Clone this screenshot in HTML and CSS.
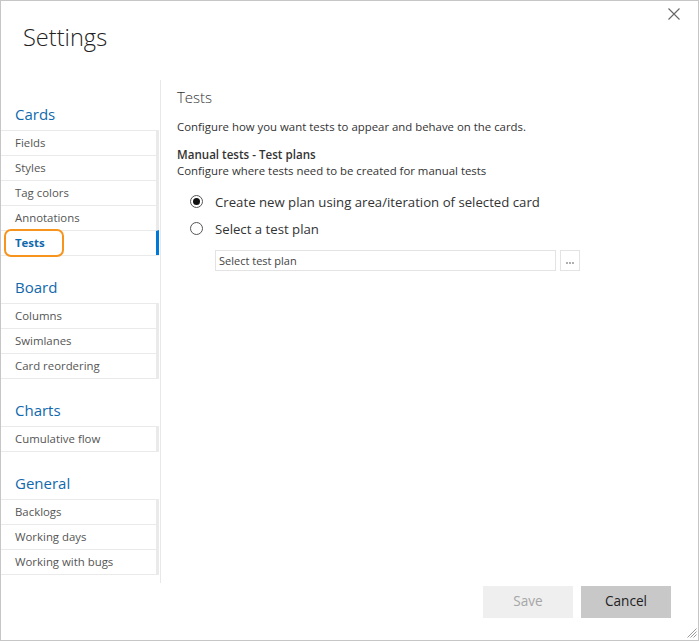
FILE: index.html
```html
<!DOCTYPE html>
<html>
<head>
<meta charset="utf-8">
<link rel="stylesheet" href="styles.css">
</head>
<body>
<div class="dialog">
  <div class="header">
    <h1 class="title">Settings</h1>
    <button class="close" aria-label="Close">
      <svg width="12" height="12" viewBox="0 0 12 12"><path d="M0.5 0.5L11.5 11.5M11.5 0.5L0.5 11.5" stroke="#666" stroke-width="1.1" fill="none"/></svg>
    </button>
  </div>
  <div class="main">
    <nav class="sidebar">
      <div class="section first">
        <div class="section-title">Cards</div>
        <ul class="items">
          <li class="item">Fields</li>
          <li class="item">Styles</li>
          <li class="item">Tag colors</li>
          <li class="item">Annotations</li>
          <li class="item selected">Tests<span class="highlight"></span></li>
        </ul>
      </div>
      <div class="section">
        <div class="section-title">Board</div>
        <ul class="items">
          <li class="item">Columns</li>
          <li class="item">Swimlanes</li>
          <li class="item">Card reordering</li>
        </ul>
      </div>
      <div class="section">
        <div class="section-title">Charts</div>
        <ul class="items">
          <li class="item">Cumulative flow</li>
        </ul>
      </div>
      <div class="section">
        <div class="section-title">General</div>
        <ul class="items">
          <li class="item">Backlogs</li>
          <li class="item">Working days</li>
          <li class="item">Working with bugs</li>
        </ul>
      </div>
    </nav>
    <div class="content">
      <h2 class="content-title">Tests</h2>
      <p class="desc">Configure how you want tests to appear and behave on the cards.</p>
      <div class="group-title">Manual tests - Test plans</div>
      <div class="group-desc">Configure where tests need to be created for manual tests</div>
      <div class="options">
        <label class="option"><span class="radio checked"></span>Create new plan using area/iteration of selected card</label>
        <label class="option"><span class="radio"></span>Select a test plan</label>
      </div>
      <div class="picker">
        <div class="picker-input">Select test plan</div>
        <div class="picker-btn"><span class="dots"></span></div>
      </div>
    </div>
  </div>
  <div class="footer">
    <button class="btn btn-save">Save</button>
    <button class="btn btn-cancel">Cancel</button>
  </div>
  <svg class="grip" width="11" height="11" viewBox="0 0 11 11">
    <path d="M10.5 1.5L1.5 10.5M10.5 4.5L4.5 10.5M10.5 7.5L7.5 10.5" stroke="#9a9a9a" stroke-width="1" fill="none"/>
  </svg>
</div>
</body>
</html>
```

FILE: styles.css
```css
* { box-sizing: border-box; }
html, body { margin: 0; padding: 0; background: #fff; }
body {
  font-family: "Open Sans", "Noto Sans", "Liberation Sans", sans-serif;
  color: #333;
}
.dialog {
  position: relative;
  width: 699px;
  height: 641px;
  border: 1px solid #c6c6c6;
  display: flex;
  flex-direction: column;
  background: #fff;
}
.header {
  height: 79px;
  flex: none;
  padding-left: 22px;
  position: relative;
}
.title {
  margin: 0;
  padding-top: 18px;
  font-size: 23.6px;
  font-weight: 300;
  line-height: 36px;
  color: #222;
}
.close {
  position: absolute;
  top: 7px;
  right: 18px;
  width: 12px;
  height: 12px;
  padding: 0;
  border: 0;
  background: transparent;
  display: block;
}
.close svg { display: block; }
.main {
  height: 503px;
  flex: none;
  display: flex;
}
.sidebar {
  flex: none;
  border-right: 1px solid #e8e8e8;
  width: 160px;
  padding-right: 1px;
}
.section { margin-top: 20px; }
.section.first { margin-top: 23px; }
.section-title {
  font-size: 15px;
  line-height: 22px;
  padding-left: 14px;
  color: #1169ad;
  margin-bottom: 5px;
}
.items {
  list-style: none;
  margin: 0;
  padding: 0;
  border-bottom: 1px solid #eaeaea;
}
.item {
  position: relative;
  height: 25px;
  border-top: 1px solid #eaeaea;
  border-right: 3px solid #eaeaea;
  padding-left: 14px;
  font-size: 11.4px;
  line-height: 23px;
  color: #555;
}
.item.selected {
  color: #1169ad;
  font-weight: 700;
  border-right-color: #0078d7;
}
.highlight {
  position: absolute;
  left: 3px;
  top: -2px;
  width: 60px;
  height: 28px;
  border: 2px solid #f7941d;
  border-radius: 7px;
}
.content {
  flex: 1;
  padding-left: 16px;
  padding-top: 7px;
}
.content-title {
  margin: 0;
  font-size: 15px;
  font-weight: 300;
  line-height: 20px;
  color: #333;
}
.desc {
  margin: 11px 0 0;
  font-size: 11.4px;
  line-height: 18px;
  color: #333;
}
.group-title {
  margin-top: 11px;
  font-size: 11.6px;
  font-weight: 600;
  line-height: 16px;
  color: #333;
}
.group-desc {
  font-size: 11.4px;
  line-height: 16px;
  color: #333;
}
.options {
  margin-top: 9px;
  padding-left: 13px;
}
.option {
  display: flex;
  align-items: center;
  height: 27px;
  font-size: 13.2px;
  color: #333;
}
.radio {
  width: 13px;
  height: 13px;
  border: 1px solid #555;
  border-radius: 50%;
  margin-right: 12px;
  flex: none;
  position: relative;
}
.radio.checked::after {
  content: "";
  position: absolute;
  left: 2px;
  top: 2px;
  width: 7px;
  height: 7px;
  border-radius: 50%;
  background: #111;
}
.picker {
  display: flex;
  gap: 4px;
  margin-top: 8px;
  padding-left: 38px;
}
.picker-input {
  width: 341px;
  height: 21px;
  border: 1px solid #e3e3e3;
  font-size: 11px;
  line-height: 19px;
  padding-left: 3px;
  color: #444;
}
.picker-btn {
  width: 20px;
  height: 21px;
  border: 1px solid #e3e3e3;
  display: flex;
  align-items: center;
  justify-content: center;
}
.dots {
  width: 8px;
  height: 2px;
  margin-top: 4px;
  background: repeating-linear-gradient(90deg, #b0b0b0 0 2px, transparent 2px 3px);
}
.footer {
  flex: 1;
  display: flex;
  justify-content: flex-end;
  gap: 8px;
  padding: 3px 27px 0 0;
}
.btn {
  width: 90px;
  height: 32px;
  border: 0;
  font-family: inherit;
  font-size: 13.6px;
  line-height: 30px;
  padding: 0 0 2px;
}
.btn-save { background: #efefef; color: #a6a6a6; }
.btn-cancel { background: #c8c8c8; color: #222; }
.grip {
  position: absolute;
  right: 1px;
  bottom: 2px;
}
```
